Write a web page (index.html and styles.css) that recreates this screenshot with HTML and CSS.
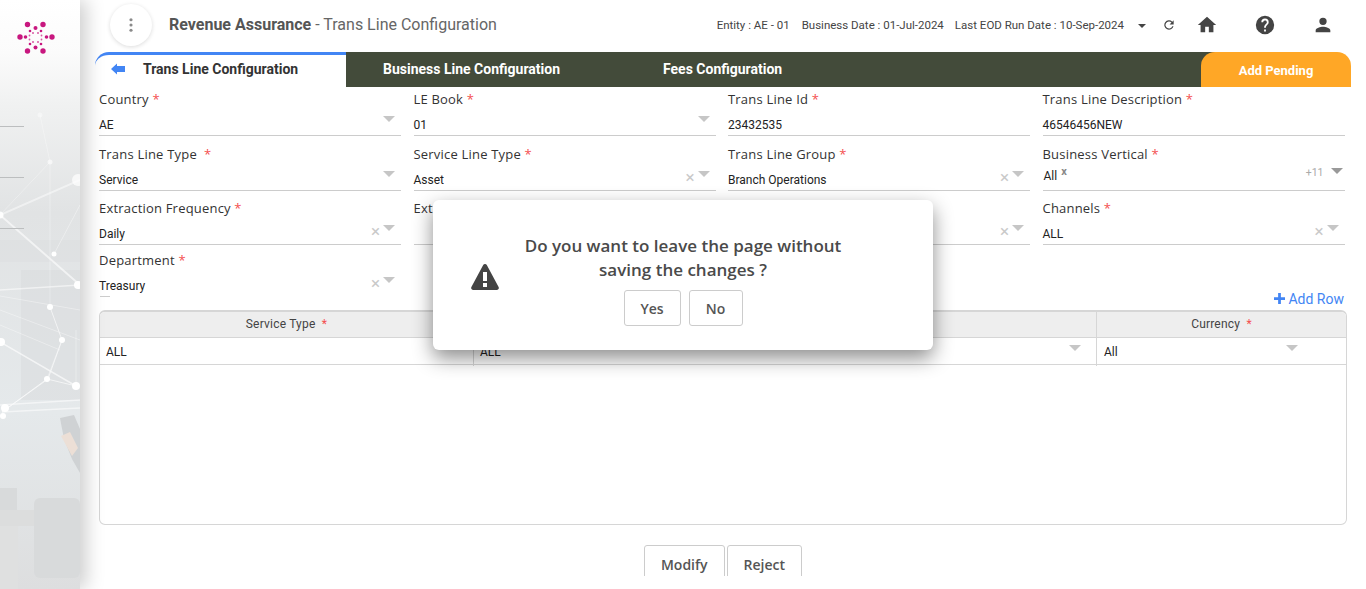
FILE: index.html
```html
<!DOCTYPE html>
<html lang="en">
<head>
<meta charset="utf-8">
<title>Trans Line Configuration</title>
<link rel="stylesheet" href="styles.css">
</head>
<body>
<div class="app">
  <aside class="sidebar">
    <svg class="side-art" viewBox="0 0 80 589" width="80" height="589" aria-hidden="true">
      <defs>
        <linearGradient id="sideFade" x1="0" y1="0" x2="0" y2="1">
          <stop offset="0" stop-color="#ffffff"/>
          <stop offset="0.09" stop-color="#fbfbfb"/>
          <stop offset="0.18" stop-color="#f0f1f1"/>
          <stop offset="0.36" stop-color="#e1e3e4"/>
          <stop offset="0.7" stop-color="#e5e9eb"/>
          <stop offset="1" stop-color="#dddedf"/>
        </linearGradient>
      </defs>
      <rect width="80" height="589" fill="url(#sideFade)"/>
      <path d="M0 240H80V262H0z" fill="#dcdedf" opacity=".5"/>
      <path d="M21 270H80V400H21z" fill="#d6dadc" opacity=".45"/>
      <rect x="34" y="498" width="46" height="80" rx="6" fill="#d8dadb"/>
      <rect x="0" y="488" width="17" height="24" fill="#d8dadb"/>
      <rect x="0" y="510" width="34" height="16" fill="#dcdddd"/>
      <path d="M0 526H18V589H0z" fill="#dfe0e0"/>
      <path d="M60 418l14-3 6 14v44l-8-14-8-20z" fill="#cfd2d4"/>
      <path d="M61 436l9-4 8 16-6 8z" fill="#ecdfd6"/>
      <g fill="none" stroke="#fff" opacity=".8">
        <path d="M0 215L80 180" stroke-width="2" opacity=".6"/>
        <path d="M0 215L80 285" stroke-width="2" opacity=".75"/>
        <path d="M0 215L50 162 40 115" stroke-width=".8" opacity=".5"/>
        <path d="M50 162L50 305" stroke-width=".8" opacity=".5"/>
        <path d="M54 254L80 205" stroke-width=".8" opacity=".6"/>
        <path d="M50 307L62 340 48 379 2 412" stroke-width="1" opacity=".8"/>
        <path d="M0 290L80 285" stroke-width="1.500" opacity=".7"/>
        <path d="M0 296L80 310M0 310L80 340M0 325L60 350" stroke-width="1" opacity=".45"/>
        <path d="M0 342L76 386" stroke-width="1.500" opacity=".8"/>
        <path d="M2 412L47 379 76 386" stroke-width="1" opacity=".8"/>
        <path d="M2 412L80 408M0 405L80 400" stroke-width="1.500" opacity=".7"/>
        <path d="M62 340L47 379M76 386L76 330" stroke-width=".8" opacity=".6"/>
      </g>
      <g fill="#fff">
        <circle cx="40" cy="115" r="2.500" opacity=".4"/>
        <circle cx="50" cy="162" r="2.500" opacity=".6"/>
        <circle cx="78" cy="180" r="6" opacity=".7"/>
        <circle cx="54" cy="254" r="2.500"/>
        <circle cx="78" cy="285" r="4"/><circle cx="50" cy="307" r="3"/>
        <circle cx="62" cy="340" r="3"/><circle cx="1" cy="342" r="4"/>
        <circle cx="47" cy="379" r="3"/><circle cx="76" cy="386" r="4"/>
        <circle cx="5" cy="408" r="4"/><circle cx="3" cy="416" r="3"/>
        <circle cx="0" cy="215" r="3.500" opacity=".9"/>
      </g>
      <g stroke="#bcbebf" stroke-width="1">
        <path d="M0 126.500H24"/><path d="M0 177.500H24"/><path d="M0 228.500H24"/>
      </g>
    </svg>
    <svg class="logo" viewBox="0 0 40 36" width="40" height="36" aria-hidden="true">
      <g fill="#c8177f">
        <circle cx="11.500" cy="3.500" r="2.700"/><circle cx="27" cy="3.500" r="2.700"/>
        <circle cx="4" cy="16" r="2.700"/><circle cx="36" cy="16" r="2.700"/>
        <circle cx="11.500" cy="30" r="2.700"/><circle cx="27" cy="30" r="2.700"/>
        <circle cx="9.500" cy="16" r="1.800"/><circle cx="30.500" cy="16" r="1.800"/>
        <circle cx="19.500" cy="7" r="2"/><circle cx="19.500" cy="26.500" r="2"/>
        <circle cx="14" cy="10" r="1.300"/><circle cx="25" cy="10" r="1.300"/>
        <circle cx="14" cy="23" r="1.300"/><circle cx="25" cy="23" r="1.300"/>
      </g>
      <g fill="#d85aa3">
        <circle cx="17" cy="12" r="1"/><circle cx="22" cy="12" r="1"/>
        <circle cx="17" cy="21" r="1"/><circle cx="22" cy="21" r="1"/>
        <circle cx="13.500" cy="14.500" r=".9"/><circle cx="25.500" cy="14.500" r=".9"/>
        <circle cx="13.500" cy="18.500" r=".9"/><circle cx="25.500" cy="18.500" r=".9"/>
      </g>
    </svg>
  </aside>

  <main class="main">
    <header class="topbar">
      <div class="menu-btn">
        <svg viewBox="0 0 4 16" width="4" height="14" aria-hidden="true"><g fill="#8a8a8a"><circle cx="2" cy="2" r="1.800"/><circle cx="2" cy="8" r="1.800"/><circle cx="2" cy="14" r="1.800"/></g></svg>
      </div>
      <h1 class="title"><b>Revenue Assurance</b> - Trans Line Configuration</h1>
      <div class="meta">
        <span>Entity : AE - 01</span>
        <span>Business Date : 01-Jul-2024</span>
        <span>Last EOD Run Date : 10-Sep-2024</span>
        <i class="meta-caret"></i>
        <svg class="ico-refresh" viewBox="0 0 24 24" width="14" height="14" aria-hidden="true"><path fill="#444" d="M17.650 6.350A8 8 0 1 0 19.730 14h-2.080a6 6 0 1 1-1.410-6.240L13 11h7V4z"/></svg>
        <svg class="ico ico-home" viewBox="0 0 24 24" width="22" height="22" aria-hidden="true"><path fill="#444" d="M10 20v-6h4v6h5v-8h3L12 3 2 12h3v8z"/></svg>
        <svg class="ico ico-help" viewBox="0 0 24 24" width="22" height="22" aria-hidden="true"><path fill="#444" d="M12 2a10 10 0 1 0 0 20 10 10 0 0 0 0-20zm1 17h-2v-2h2zm2.070-7.750l-.9.920C13.450 12.900 13 13.500 13 15h-2v-.5c0-1.100.45-2.100 1.170-2.830l1.240-1.260A2 2 0 1 0 10 9H8a4 4 0 1 1 8 0c0 .88-.36 1.680-.93 2.250z"/></svg>
        <svg class="ico ico-user" viewBox="0 0 24 24" width="22" height="22" aria-hidden="true"><path fill="#444" d="M12 12a4 4 0 1 0 0-8 4 4 0 0 0 0 8zm0 2c-2.670 0-8 1.340-8 4v2h16v-2c0-2.660-5.330-4-8-4z"/></svg>
      </div>
    </header>

    <nav class="tabs">
      <div class="tab-active">
        <svg viewBox="0 0 14 12" width="14" height="12" aria-hidden="true"><path fill="#4285f4" d="M0 6l6-5.500V3h8v6H6v2.500z"/></svg>
        <span>Trans Line Configuration</span>
      </div>
      <div class="tab-strip">
        <div class="tab tab-business">Business Line Configuration</div>
        <div class="tab tab-fees">Fees Configuration</div>
      </div>
      <div class="tab-pending">Add Pending</div>
    </nav>

    <section class="form">
      <div class="field"><label>Country <em>*</em></label><div class="control"><span class="val">AE</span><i class="caret"></i></div></div>
      <div class="field"><label>LE Book <em>*</em></label><div class="control"><span class="val">01</span><i class="caret"></i></div></div>
      <div class="field"><label>Trans Line Id <em>*</em></label><div class="control"><span class="val">23432535</span></div></div>
      <div class="field"><label>Trans Line Description <em>*</em></label><div class="control"><span class="val">46546456NEW</span></div></div>

      <div class="field field-second"><label>Trans Line Type &nbsp;<em>*</em></label><div class="control"><span class="val">Service</span><i class="caret"></i></div></div>
      <div class="field field-second"><label>Service Line Type <em>*</em></label><div class="control"><span class="val">Asset</span><b class="clear">×</b><i class="caret"></i></div></div>
      <div class="field field-second"><label>Trans Line Group <em>*</em></label><div class="control"><span class="val">Branch Operations</span><b class="clear">×</b><i class="caret"></i></div></div>
      <div class="field field-second"><label>Business Vertical <em>*</em></label><div class="control control-multi"><span class="val">All<sup>x</sup></span><span class="more">+11</span><i class="caret caret-dark"></i></div></div>

      <div class="field field-tight"><label>Extraction Frequency <em>*</em></label><div class="control"><span class="val">Daily</span><b class="clear">×</b><i class="caret"></i></div></div>
      <div class="field field-tight"><label>Ext</label><div class="control"></div></div>
      <div class="field field-tight"><label>&nbsp;</label><div class="control"><b class="clear">×</b><i class="caret"></i></div></div>
      <div class="field field-tight"><label>Channels <em>*</em></label><div class="control"><span class="val">ALL</span><b class="clear">×</b><i class="caret"></i></div></div>

      <div class="field field-tight field-short"><label>Department <em>*</em></label><div class="control"><span class="val">Treasury</span><b class="clear">×</b><i class="caret"></i></div></div>
    </section>

    <div class="row-action">
      <span class="add-row"><svg viewBox="0 0 12 12" width="11" height="11" aria-hidden="true"><path fill="#4285f4" d="M4.500 0h3v4.500H12v3H7.500V12h-3V7.500H0v-3h4.500z"/></svg> Add Row</span>
    </div>

    <section class="table">
      <div class="thead">
        <div class="th">Service Type &nbsp;<em>*</em></div>
        <div class="th"></div>
        <div class="th">Currency &nbsp;<em>*</em></div>
      </div>
      <div class="tr">
        <div class="td">ALL</div>
        <div class="td">ALL<i class="caret"></i></div>
        <div class="td">All<i class="caret"></i></div>
      </div>
    </section>

    <div class="actions">
      <button class="btn" type="button">Modify</button>
      <button class="btn" type="button">Reject</button>
    </div>
  </main>
</div>

<div class="dialog" role="dialog">
  <svg class="warn" viewBox="0 0 28 26" width="28" height="26" aria-hidden="true"><path fill="#444" fill-rule="evenodd" d="M14 0c.8 0 1.400.4 1.800 1.100l11.800 22c.7 1.300-.2 2.900-1.800 2.900H2.200C.6 26-.3 24.400.4 23.100l11.800-22C12.600.4 13.200 0 14 0zm-2 8v9h4V8zm0 11v4h4v-4z"/></svg>
  <div class="dialog-body">
    <p class="dialog-text">Do you want to leave the page without<br>saving the changes ?</p>
    <div class="dialog-btns">
      <button class="dlg-btn dlg-yes" type="button">Yes</button>
      <button class="dlg-btn dlg-no" type="button">No</button>
    </div>
  </div>
</div>
</body>
</html>
```
FILE: styles.css
```css
* { box-sizing: border-box; }
html, body { margin: 0; height: 589px; overflow: hidden; background: #fff; }
body { font-family: Roboto, "Liberation Sans", sans-serif; color: #333; position: relative; }

.app { display: flex; height: 589px; }

.sidebar {
  width: 80px; flex: none; position: relative; height: 589px;
  box-shadow: 6px 0 18px rgba(0,0,0,.2);
}
.side-art { display: block; }
.logo { position: absolute; left: 16px; top: 21px; }

.main { width: 1271px; flex: none; padding-left: 15px; display: flex; flex-direction: column; height: 576px; overflow: hidden; }

.topbar { height: 52px; flex: none; display: flex; align-items: flex-start; }
.menu-btn {
  width: 42px; height: 42px; border-radius: 50%; background: #fff; margin: 4px 0 0 15px;
  box-shadow: 0 1px 4px rgba(0,0,0,.14); display: flex; align-items: center; justify-content: center;
}
.title { margin: 14px 0 0 17px; font-size: 16px; line-height: 22px; font-weight: 400; color: #666; white-space: nowrap; }
.title b { font-weight: 700; color: #555; }
.meta { margin-left: auto; display: flex; align-items: center; height: 22px; margin-top: 14px; font-size: 11.500px; color: #444; white-space: nowrap; }
.meta span { margin-right: 12px; }
.meta span:nth-child(2) { margin-right: 11px; }
.meta span:nth-child(3) { margin-right: 14px; }
.meta-caret { width: 0; height: 0; border-left: 4px solid transparent; border-right: 4px solid transparent; border-top: 4px solid #444; margin-right: 16px; margin-top: 1px; }
.ico-refresh { margin-right: 20px; }
.ico-home { margin-right: 36px; }
.ico-help { margin-right: 36px; }
.ico-user { margin-right: 17px; }

.tabs { height: 35px; flex: none; display: flex; align-items: stretch; }
.tab-active {
  width: 251px; flex: none; background: #fff; border-top: 3px solid #4285f4; border-top-left-radius: 14px;
  display: flex; align-items: center; padding: 0 0 4px 16px; gap: 18px; font-size: 14px; font-weight: 700; color: #333;
}
.tab-strip { flex: 1; background: #434b3a; display: flex; margin-right: -14px; }
.tab { font-size: 14px; font-weight: 700; color: #fff; display: flex; align-items: center; padding-bottom: 2px; white-space: nowrap; }
.tab-business { margin-left: 37px; width: 280px; }
.tab-pending {
  position: relative; width: 150px; flex: none; background: #ffa726; border-radius: 14px 14px 0 0;
  color: #fff; font-size: 13px; font-weight: 700; display: flex; align-items: center; justify-content: center; padding-top: 2px;
}

.form {
  display: grid; grid-template-columns: repeat(4, 302px); column-gap: 12.500px; padding: 3px 0 0 4px; flex: none;
}
.field { height: 55px; min-width: 0; }
.field-second { height: 54px; }
.field-tight { height: 52px; }
.field label { display: block; font-family: "Open Sans", sans-serif; font-size: 13px; line-height: 18px; letter-spacing: .2px; color: #333; white-space: nowrap; }
.field em, .th em { color: #f44f4f; font-style: normal; }
.control { height: 28px; position: relative; border-bottom: 1px solid #ccc; display: flex; align-items: flex-end; padding-bottom: 2px; }
.val { font-size: 12px; line-height: 15px; color: #222; }
.val sup { font-size: 11px; font-weight: 700; color: #888; line-height: 0; margin-left: 4px; }
.control-multi { padding: 0 0 6px 1px; }
.more { position: absolute; right: 21px; top: 3px; font-size: 10.500px; color: #aaa; }
.caret { position: absolute; right: 6px; top: 8px; width: 0; height: 0; border-left: 6px solid transparent; border-right: 6px solid transparent; border-top: 6px solid #c6c6c6; }
.caret-dark { border-top-color: #999; right: 2px; top: 5px; }
.clear { position: absolute; right: 21px; top: 8px; font-size: 17px; line-height: 12px; color: #c9c9c9; font-weight: 400; }
.field-short .control { border-bottom-color: transparent; }
.field-short .control::after { content: ""; position: absolute; left: 1px; bottom: -1px; width: 10px; height: 1px; background: #ccc; }

.row-action { height: 23px; flex: none; margin-top: -16px; display: flex; justify-content: flex-end; padding-right: 7px; align-items: center; }
.add-row { font-size: 14px; color: #4285f4; white-space: nowrap; }

.table { margin-left: 4px; width: 1248px; height: 215px; flex: none; border: 1px solid #d6d6d6; border-top-width: 2px; border-radius: 6px; overflow: hidden; }
.thead, .tr { display: grid; grid-template-columns: 374px 623px 1fr; height: 27px; border-bottom: 1px solid #d6d6d6; }
.thead { background: #eee; height: 26px; }
.th { font-size: 12px; line-height: 25px; letter-spacing: .2px; text-align: center; color: #444; border-right: 1px solid #d6d6d6; }
.th:last-child, .td:last-child { border-right: 0; }
.td { position: relative; font-size: 12px; line-height: 28px; padding-left: 6px; color: #222; border-right: 1px solid #d6d6d6; }
.td:last-child { padding-left: 7px; }
.td .caret { top: 7px; right: 15px; }
.td:last-child .caret { right: 48px; }

.actions { display: flex; justify-content: center; gap: 2px; margin-top: 20px; flex: none; }
.btn { font-family: "Open Sans", sans-serif; font-size: 14px; font-weight: 600; color: #555; background: #fff; border: 1px solid #ccc; border-radius: 3px; height: 38px; padding: 0 16px; }

.dialog {
  position: absolute; left: 433px; top: 200px; width: 500px; height: 150px; background: #fff; border-radius: 6px;
  box-shadow: 0 8px 20px rgba(0,0,0,.45); display: flex; font-family: "Open Sans", sans-serif;
}
.warn { position: absolute; left: 38px; top: 64px; }
.dialog-body { width: 100%; padding: 34px 73px 0 73px; text-align: center; }
.dialog-text { margin: 0; font-size: 17px; line-height: 24px; font-weight: 600; color: #4a4a4a; white-space: nowrap; }
.dialog-btns { display: flex; justify-content: center; gap: 8px; margin-top: 8px; }
.dlg-btn { height: 36px; background: #fff; border: 1px solid #ccc; border-radius: 3px; font-family: "Open Sans", sans-serif; font-size: 14px; font-weight: 600; color: #555; padding: 0; }
.dlg-yes { width: 57px; }
.dlg-no { width: 54px; }
```
